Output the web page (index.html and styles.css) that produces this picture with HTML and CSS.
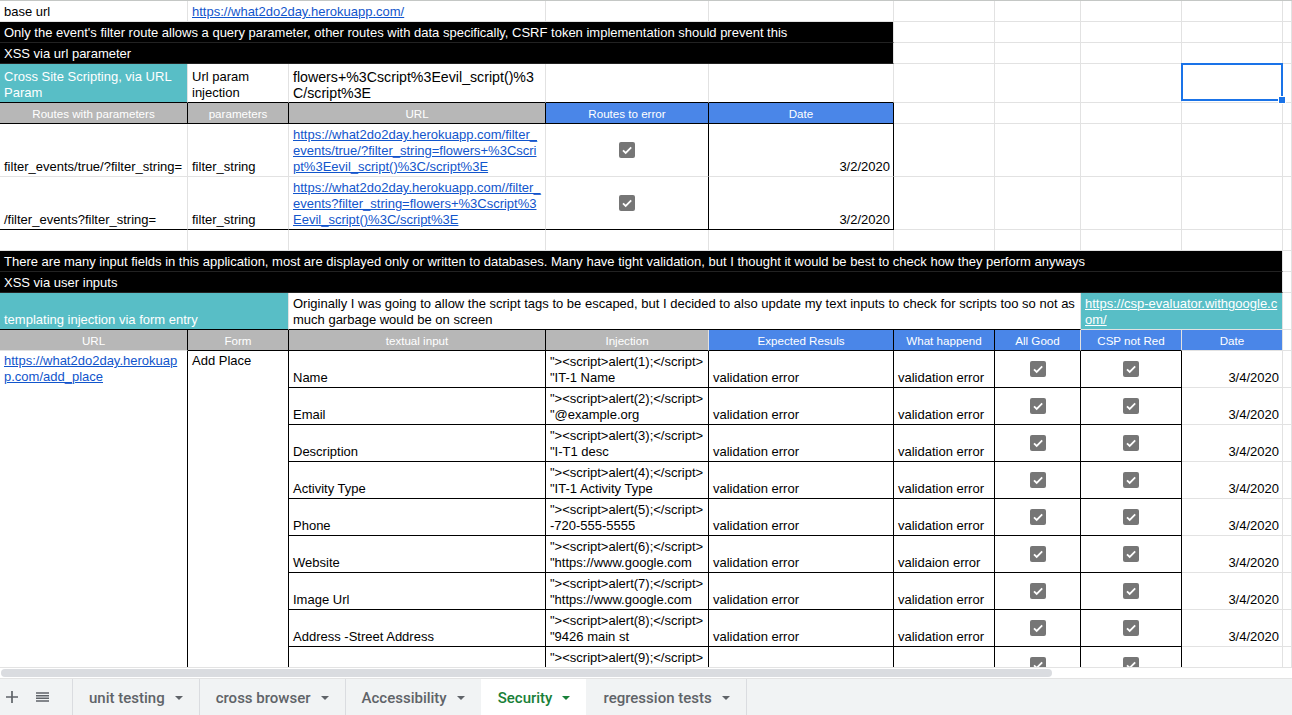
FILE: index.html
```html
<!DOCTYPE html>
<html>
<head>
<meta charset="utf-8">
<title>Security</title>
<link rel="stylesheet" href="styles.css">
</head>
<body>
<div class="sheet">
  <div class="grid">
    <!-- row 1 -->
    <div class="c">base url</div>
    <div class="c s2"><a class="lk">https://what2do2day.herokuapp.com/</a></div>
    <div class="c"></div><div class="c"></div><div class="c"></div><div class="c"></div><div class="c"></div><div class="c"></div><div class="c"></div>
    <!-- row 2 -->
    <div class="c k s5">Only the event's filter route allows a query parameter, other routes with data specifically, CSRF token implementation should prevent this</div>
    <div class="c"></div><div class="c"></div><div class="c"></div><div class="c"></div><div class="c"></div>
    <!-- row 3 -->
    <div class="c k s5">XSS via url parameter</div>
    <div class="c"></div><div class="c"></div><div class="c"></div><div class="c"></div><div class="c"></div>
    <!-- row 4 -->
    <div class="c tl bb"><span>Cross Site Scripting, via URL<br>Param</span></div>
    <div class="c bb"><span>Url param<br>injection</span></div>
    <div class="c bb big"><span>flowers+%3Cscript%3Eevil_script()%3<br>C/script%3E</span></div>
    <div class="c bb"></div><div class="c bb"></div>
    <div class="c"></div><div class="c"></div><div class="c"></div>
    <div class="c selcell"><div class="sel"><span class="handle"></span></div></div>
    <div class="c"></div>
    <!-- row 5 -->
    <div class="c h hg br bb">Routes with parameters</div>
    <div class="c h hg br bb">parameters</div>
    <div class="c h hg br bb">URL</div>
    <div class="c h hb br bb">Routes to error</div>
    <div class="c h hb br bb">Date</div>
    <div class="c"></div><div class="c"></div><div class="c"></div><div class="c"></div><div class="c"></div>
    <!-- row 6 -->
    <div class="c">filter_events/true/?filter_string=</div>
    <div class="c">filter_string</div>
    <div class="c"><a class="lk">https://what2do2day.herokuapp.com/filter_<br>events/true/?filter_string=flowers+%3Cscri<br>pt%3Eevil_script()%3C/script%3E</a></div>
    <div class="c ctr br"><span class="cb"><svg viewBox="0 0 16 16" width="16" height="16"><path d="M4 8.3l2.7 2.6L12.2 5.4" fill="none" stroke="#fff" stroke-width="1.8"/></svg></span></div>
    <div class="c r br">3/2/2020</div>
    <div class="c"></div><div class="c"></div><div class="c"></div><div class="c"></div><div class="c"></div>
    <!-- row 7 -->
    <div class="c bb">/filter_events?filter_string=</div>
    <div class="c bb">filter_string</div>
    <div class="c bb"><a class="lk">https://what2do2day.herokuapp.com//filter_<br>events?filter_string=flowers+%3Cscript%3<br>Eevil_script()%3C/script%3E</a></div>
    <div class="c ctr br bb"><span class="cb"><svg viewBox="0 0 16 16" width="16" height="16"><path d="M4 8.3l2.7 2.6L12.2 5.4" fill="none" stroke="#fff" stroke-width="1.8"/></svg></span></div>
    <div class="c r br bb">3/2/2020</div>
    <div class="c"></div><div class="c"></div><div class="c"></div><div class="c"></div><div class="c"></div>
    <!-- row 8 -->
    <div class="c"></div><div class="c"></div><div class="c"></div><div class="c"></div><div class="c"></div><div class="c"></div><div class="c"></div><div class="c"></div><div class="c"></div><div class="c"></div>
    <!-- row 9 -->
    <div class="c k s9">There are many input fields in this application, most are displayed only or written to databases. Many have tight validation, but I thought it would be best to check how they perform anyways</div>
    <div class="c"></div>
    <!-- row 10 -->
    <div class="c k s9">XSS via user inputs</div>
    <div class="c"></div>
    <!-- row 11 -->
    <div class="c tl s2 bb">templating injection via form entry</div>
    <div class="c s5 bb"><span>Originally I was going to allow the script tags to be escaped, but I decided to also update my text inputs to check for scripts too so not as<br>much garbage would be on screen</span></div>
    <div class="c tl s2"><a class="lk lkw">https://csp-evaluator.withgoogle.c<br>om/</a></div>
    <div class="c"></div>
    <!-- row 12 -->
    <div class="c h hg br">URL</div>
    <div class="c h hg br bb">Form</div>
    <div class="c h hg br bb">textual input</div>
    <div class="c h hg bb">Injection</div>
    <div class="c h hb br bb">Expected Resuls</div>
    <div class="c h hb br bb">What happend</div>
    <div class="c h hb bb">All Good</div>
    <div class="c h hb bb">CSP not Red</div>
    <div class="c h hb">Date</div>
    <div class="c"></div>
    <!-- row 13 -->
    <div class="c rs9 br top"><a class="lk">https://what2do2day.herokuap<br>p.com/add_place</a></div>
    <div class="c rs9 br top">Add Place</div>
    <div class="c br bb">Name</div>
    <div class="c br bb"><span>"&gt;&lt;script&gt;alert(1);&lt;/script&gt;<br>"IT-1 Name</span></div>
    <div class="c br bb">validation error</div>
    <div class="c br bb">validation error</div>
    <div class="c ctr br bb"><span class="cb"><svg viewBox="0 0 16 16" width="16" height="16"><path d="M4 8.3l2.7 2.6L12.2 5.4" fill="none" stroke="#fff" stroke-width="1.8"/></svg></span></div>
    <div class="c ctr br bb"><span class="cb"><svg viewBox="0 0 16 16" width="16" height="16"><path d="M4 8.3l2.7 2.6L12.2 5.4" fill="none" stroke="#fff" stroke-width="1.8"/></svg></span></div>
    <div class="c r">3/4/2020</div>
    <div class="c"></div>
    <!-- row 14 -->
    <div class="c br bb">Email</div>
    <div class="c br bb"><span>"&gt;&lt;script&gt;alert(2);&lt;/script&gt;<br>"@example.org</span></div>
    <div class="c br bb">validation error</div>
    <div class="c br bb">validation error</div>
    <div class="c ctr br bb"><span class="cb"><svg viewBox="0 0 16 16" width="16" height="16"><path d="M4 8.3l2.7 2.6L12.2 5.4" fill="none" stroke="#fff" stroke-width="1.8"/></svg></span></div>
    <div class="c ctr br bb"><span class="cb"><svg viewBox="0 0 16 16" width="16" height="16"><path d="M4 8.3l2.7 2.6L12.2 5.4" fill="none" stroke="#fff" stroke-width="1.8"/></svg></span></div>
    <div class="c r">3/4/2020</div>
    <div class="c"></div>
    <!-- row 15 -->
    <div class="c br bb">Description</div>
    <div class="c br bb"><span>"&gt;&lt;script&gt;alert(3);&lt;/script&gt;<br>"I-T1 desc</span></div>
    <div class="c br bb">validation error</div>
    <div class="c br bb">validation error</div>
    <div class="c ctr br bb"><span class="cb"><svg viewBox="0 0 16 16" width="16" height="16"><path d="M4 8.3l2.7 2.6L12.2 5.4" fill="none" stroke="#fff" stroke-width="1.8"/></svg></span></div>
    <div class="c ctr br bb"><span class="cb"><svg viewBox="0 0 16 16" width="16" height="16"><path d="M4 8.3l2.7 2.6L12.2 5.4" fill="none" stroke="#fff" stroke-width="1.8"/></svg></span></div>
    <div class="c r">3/4/2020</div>
    <div class="c"></div>
    <!-- row 16 -->
    <div class="c br bb">Activity Type</div>
    <div class="c br bb"><span>"&gt;&lt;script&gt;alert(4);&lt;/script&gt;<br>"IT-1 Activity Type</span></div>
    <div class="c br bb">validation error</div>
    <div class="c br bb">validation error</div>
    <div class="c ctr br bb"><span class="cb"><svg viewBox="0 0 16 16" width="16" height="16"><path d="M4 8.3l2.7 2.6L12.2 5.4" fill="none" stroke="#fff" stroke-width="1.8"/></svg></span></div>
    <div class="c ctr br bb"><span class="cb"><svg viewBox="0 0 16 16" width="16" height="16"><path d="M4 8.3l2.7 2.6L12.2 5.4" fill="none" stroke="#fff" stroke-width="1.8"/></svg></span></div>
    <div class="c r">3/4/2020</div>
    <div class="c"></div>
    <!-- row 17 -->
    <div class="c br bb">Phone</div>
    <div class="c br bb"><span>"&gt;&lt;script&gt;alert(5);&lt;/script&gt;<br>-720-555-5555</span></div>
    <div class="c br bb">validation error</div>
    <div class="c br bb">validation error</div>
    <div class="c ctr br bb"><span class="cb"><svg viewBox="0 0 16 16" width="16" height="16"><path d="M4 8.3l2.7 2.6L12.2 5.4" fill="none" stroke="#fff" stroke-width="1.8"/></svg></span></div>
    <div class="c ctr br bb"><span class="cb"><svg viewBox="0 0 16 16" width="16" height="16"><path d="M4 8.3l2.7 2.6L12.2 5.4" fill="none" stroke="#fff" stroke-width="1.8"/></svg></span></div>
    <div class="c r">3/4/2020</div>
    <div class="c"></div>
    <!-- row 18 -->
    <div class="c br bb">Website</div>
    <div class="c br bb"><span>"&gt;&lt;script&gt;alert(6);&lt;/script&gt;<br>"https://www.google.com</span></div>
    <div class="c br bb">validation error</div>
    <div class="c br bb">validaion error</div>
    <div class="c ctr br bb"><span class="cb"><svg viewBox="0 0 16 16" width="16" height="16"><path d="M4 8.3l2.7 2.6L12.2 5.4" fill="none" stroke="#fff" stroke-width="1.8"/></svg></span></div>
    <div class="c ctr br bb"><span class="cb"><svg viewBox="0 0 16 16" width="16" height="16"><path d="M4 8.3l2.7 2.6L12.2 5.4" fill="none" stroke="#fff" stroke-width="1.8"/></svg></span></div>
    <div class="c r">3/4/2020</div>
    <div class="c"></div>
    <!-- row 19 -->
    <div class="c br bb">Image Url</div>
    <div class="c br bb"><span>"&gt;&lt;script&gt;alert(7);&lt;/script&gt;<br>"https://www.google.com</span></div>
    <div class="c br bb">validation error</div>
    <div class="c br bb">validation error</div>
    <div class="c ctr br bb"><span class="cb"><svg viewBox="0 0 16 16" width="16" height="16"><path d="M4 8.3l2.7 2.6L12.2 5.4" fill="none" stroke="#fff" stroke-width="1.8"/></svg></span></div>
    <div class="c ctr br bb"><span class="cb"><svg viewBox="0 0 16 16" width="16" height="16"><path d="M4 8.3l2.7 2.6L12.2 5.4" fill="none" stroke="#fff" stroke-width="1.8"/></svg></span></div>
    <div class="c r">3/4/2020</div>
    <div class="c"></div>
    <!-- row 20 -->
    <div class="c br bb">Address -Street Address</div>
    <div class="c br bb"><span>"&gt;&lt;script&gt;alert(8);&lt;/script&gt;<br>"9426 main st</span></div>
    <div class="c br bb">validation error</div>
    <div class="c br bb">validation error</div>
    <div class="c ctr br bb"><span class="cb"><svg viewBox="0 0 16 16" width="16" height="16"><path d="M4 8.3l2.7 2.6L12.2 5.4" fill="none" stroke="#fff" stroke-width="1.8"/></svg></span></div>
    <div class="c ctr br bb"><span class="cb"><svg viewBox="0 0 16 16" width="16" height="16"><path d="M4 8.3l2.7 2.6L12.2 5.4" fill="none" stroke="#fff" stroke-width="1.8"/></svg></span></div>
    <div class="c r">3/4/2020</div>
    <div class="c"></div>
    <!-- row 21 -->
    <div class="c br bb"></div>
    <div class="c br bb"><span>"&gt;&lt;script&gt;alert(9);&lt;/script&gt;<br>&nbsp;</span></div>
    <div class="c br bb"></div>
    <div class="c br bb"></div>
    <div class="c ctr br bb"><span class="cb"><svg viewBox="0 0 16 16" width="16" height="16"><path d="M4 8.3l2.7 2.6L12.2 5.4" fill="none" stroke="#fff" stroke-width="1.8"/></svg></span></div>
    <div class="c ctr br bb"><span class="cb"><svg viewBox="0 0 16 16" width="16" height="16"><path d="M4 8.3l2.7 2.6L12.2 5.4" fill="none" stroke="#fff" stroke-width="1.8"/></svg></span></div>
    <div class="c r"></div>
    <div class="c"></div>
  </div>
</div>
<div class="hscroll"><div class="thumb"></div></div>
<div class="tabbar">
  <div class="tb-icons">
    <span class="tb-btn"><svg width="12" height="12" viewBox="0 0 12 12"><path d="M6 0v12M0 6h12" stroke="#5f6368" stroke-width="1.7" fill="none"/></svg></span>
    <span class="tb-btn"><svg width="13" height="10" viewBox="0 0 13 10"><path d="M0 1h13M0 3.7h13M0 6.3h13M0 9h13" stroke="#5f6368" stroke-width="1.4" fill="none"/></svg></span>
  </div>
  <div class="tab">unit testing<span class="caret"></span></div>
  <div class="tab">cross browser<span class="caret"></span></div>
  <div class="tab">Accessibility<span class="caret"></span></div>
  <div class="tab active">Security<span class="caret"></span></div>
  <div class="tab noline">regression tests<span class="caret"></span></div>
  <div class="tab-rest"></div>
</div>
</body>
</html>
```

FILE: styles.css
```css
html, body {
  margin: 0;
  padding: 0;
}
body {
  width: 1292px;
  height: 715px;
  overflow: hidden;
  background: #fff;
  font-family: "Liberation Sans", Arial, sans-serif;
}

.sheet {
  height: 667px;
  box-sizing: border-box;
  border-top: 1px solid #c4c7c5;
  overflow: hidden;
}

.grid {
  display: grid;
  grid-template-columns: 188px 101px 257px 163px 185px 101px 86px 101px 101px 9px;
  grid-template-rows: 21px 21px 21px 39px 21px 53px 53px 21px 21px 21px 37px 21px repeat(9, 37px);
}

.c {
  box-sizing: border-box;
  min-width: 0;
  border-right: 1px solid #e2e2e2;
  border-bottom: 1px solid #e2e2e2;
  padding: 0 3px 1px 4px;
  display: flex;
  align-items: flex-end;
  font-size: 13px;
  line-height: 16px;
  color: #000;
  white-space: nowrap;
  overflow: hidden;
}

.s2 { grid-column: span 2; }
.s5 { grid-column: span 5; }
.s9 { grid-column: span 9; }
.rs9 { grid-row: span 9; }

.bb { border-bottom-color: #000; }
.br { border-right-color: #000; }

.k {
  background: #000;
  color: #fff;
  border-bottom-color: #222;
}

.tl {
  background: #58bec6;
  color: #fff;
}

.big {
  font-size: 14.2px;
}

.h {
  justify-content: center;
  align-items: center;
  color: #fff;
  font-size: 11.6px;
  padding: 1px 2px 0;
}
.hg { background: #b7b7b7; }
.hb { background: #4a86e8; }

.r { justify-content: flex-end; }
.ctr {
  justify-content: center;
  align-items: center;
  padding: 0;
}
.top {
  align-items: flex-start;
  padding-top: 2px;
}

.lk {
  color: #1155cc;
  text-decoration: underline;
}
.lkw { color: #fff; }

.cb {
  display: block;
  width: 16px;
  height: 16px;
  border-radius: 2px;
  background: #767676;
}
.cb svg { display: block; }

.selcell {
  position: relative;
  overflow: visible;
}
.sel {
  position: absolute;
  left: -1px;
  top: -1px;
  right: -1px;
  bottom: 1px;
  border: 2px solid #1a73e8;
}
.handle {
  position: absolute;
  right: -5px;
  bottom: -5px;
  width: 6px;
  height: 6px;
  background: #1a73e8;
  border: 1px solid #fff;
}

.hscroll {
  height: 12px;
  box-sizing: border-box;
  border-top: 1px solid #e3e3e3;
  border-bottom: 1px solid #e3e3e3;
  background: #fff;
  padding: 1px 0 0 1px;
}
.thumb {
  width: 1051px;
  height: 8px;
  border-radius: 4px;
  background: #dadce0;
}

.tabbar {
  height: 36px;
  background: #f1f3f4;
  display: flex;
  align-items: stretch;
  font-family: Roboto, "Noto Sans", sans-serif;
}
.tb-icons {
  width: 72px;
  display: flex;
  align-items: center;
  gap: 6px;
}
.tb-btn {
  display: flex;
  align-items: center;
  justify-content: center;
  width: 24px;
  height: 24px;
}
.tab {
  display: flex;
  align-items: center;
  gap: 10px;
  padding: 2px 16px 0;
  border-left: 1px solid #dadce0;
  font-size: 15px;
  font-weight: 500;
  color: #5f6368;
}
.tab.active {
  background: #fff;
  color: #188038;
  border-left-color: transparent;
}
.tab.noline { border-left-color: transparent; }
.tab-rest {
  border-left: 1px solid #dadce0;
  flex: 1;
}
.caret {
  width: 0;
  height: 0;
  border-left: 4px solid transparent;
  border-right: 4px solid transparent;
  border-top: 4px solid currentColor;
}
```
